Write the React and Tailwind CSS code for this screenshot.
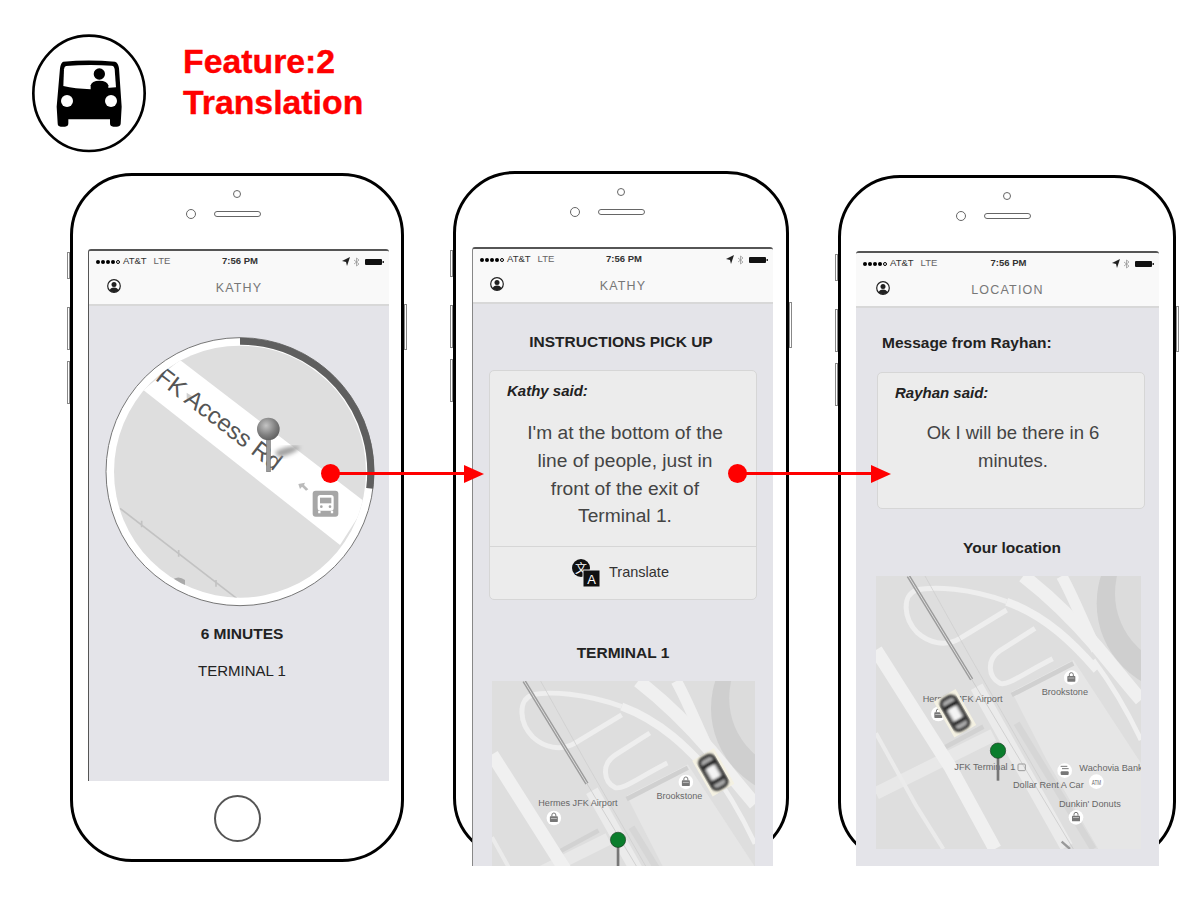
import React from 'react';

const font = { fontFamily: '"Liberation Sans", Arial, sans-serif' };

function Poi({ x, y, kind = 'bag' }) {
    return (
        <g>
            <circle cx={x} cy={y} r="22" fill="#fff" />
            {kind === 'bag' && (
                <g>
                    <rect x={x - 12} y={y - 5} width="24" height="17" rx="2" fill="#777" />
                    <path d={`M${x - 6} ${y - 5}v-4a6 6 0 0 1 12 0v4`} fill="none" stroke="#777" strokeWidth="3" />
                    <rect x={x - 9} y={y} width="18" height="2" fill="#ddd" />
                </g>
            )}
            {kind === 'car' && (
                <g>
                    <path d={`M${x - 12} ${y - 13}h20M${x - 8} ${y - 6}h20`} stroke="#777" strokeWidth="3" />
                    <rect x={x - 12} y={y + 2} width="24" height="11" rx="3" fill="#777" />
                </g>
            )}
            {kind === 'atm' && (
                <text x={x} y={y + 9} textAnchor="middle" fontSize="24" fill="#666" textLength="28" lengthAdjust="spacingAndGlyphs" style={font}>ATM</text>
            )}
        </g>
    );
}

function TerminalMap({ pin, car, className, maxLabelY = 900 }) {
    const labels = [
        ['Hermes JFK Airport', 188, 427],
        ['Brookstone', 545, 406],
        ['JFK Terminal 1', 283, 631],
        ['Wachovia Bank', 658, 633],
        ['Dollar Rent A Car', 459, 685],
        ["Dunkin' Donuts", 597, 741],
    ].filter((l) => l[2] < maxLabelY);
    return (
        <svg viewBox="48 48 795 819" className={className}>
            <defs>
                <filter id="soft"><feGaussianBlur stdDeviation="3" /></filter>
            </defs>
            <rect x="48" y="48" width="795" height="819" fill="#dedede" />
            <path d="M455 395L640 300L843 610V867H715L560 600Z" fill="#e6e6e6" />
            <path d="M455 405L640 310" stroke="#d0d0d0" strokeWidth="14" />
            <circle cx="980" cy="130" r="270" fill="#cfcfcf" />
            <circle cx="990" cy="100" r="225" fill="#dcdcdc" />
            <path d="M48 700L400 525" stroke="#e8e8e8" strokeWidth="38" fill="none" />
            <path d="M240 570L370 500" stroke="#d2d2d2" strokeWidth="14" fill="none" />
            <g fill="none" stroke="#f0f0f0">
                <path d="M490 48C570 110 650 190 710 260C760 320 800 370 843 420" strokeWidth="40" />
                <path d="M605 48C640 110 670 190 710 270" strokeWidth="34" />
                <path d="M700 300C760 380 810 470 843 540" strokeWidth="14" />
                <path d="M440 125C560 170 640 250 710 330" strokeWidth="24" />
                <path d="M48 270L270 620L405 867" strokeWidth="40" />
                <path d="M48 520L170 740L250 867" strokeWidth="12" stroke="#ebebeb" />
                <path d="M350 380L620 860" strokeWidth="40" stroke="#ebebeb" />
                <path d="M470 490L700 867" strokeWidth="20" stroke="#d6d6d6" />
                <path d="M440 125C330 85 220 78 170 90C125 105 130 175 172 218C205 248 255 262 300 235L440 150" strokeWidth="15" stroke="#eeeeee" />
                <path d="M525 205L420 272C378 300 385 352 420 370C445 378 490 340 578 296" strokeWidth="15" stroke="#eeeeee" />
            </g>
            <g fill="none">
                <path d="M145 48L335 358" stroke="#9c9c9c" strokeWidth="11" />
                <path d="M145 48L335 358" stroke="#dddddd" strokeWidth="3" />
                <path d="M195 48L330 290L560 690" stroke="#cccccc" strokeWidth="2" />
                <path d="M335 358L640 867" stroke="#c4c4c4" strokeWidth="2" />
                <path d="M605 845L630 867" stroke="#999" strokeWidth="7" />
            </g>
            {labels.map(([t, x, y]) => (
                <text key={t} x={x} y={y} fontSize="27.500" fill="#666" style={font}>{t}</text>
            ))}
            <Poi x={634} y={353} />
            <Poi x={235} y={462} />
            <Poi x={648} y={772} />
            <Poi x={614} y={632} kind="car" />
            <Poi x={709} y={665} kind="atm" />
            <rect x="474" y="612" width="22" height="20" rx="3" fill="none" stroke="#999" strokeWidth="3" />
            <g transform={`rotate(-30 ${car[0]} ${car[1]})`}>
                <rect x={car[0] - 38} y={car[1] - 62} width="76" height="124" fill="#f4f1e2" />
                <g filter="url(#soft)">
                    <rect x={car[0] - 24} y={car[1] - 52} width="48" height="104" rx="16" fill="#aaa" stroke="#333" strokeWidth="10" />
                    <rect x={car[0] - 20} y={car[1] - 34} width="40" height="14" fill="#222" />
                    <rect x={car[0] - 20} y={car[1] + 20} width="40" height="14" fill="#333" />
                    <rect x={car[0] - 13} y={car[1] - 20} width="26" height="40" rx="3" fill="#f4f4f4" />
                </g>
            </g>
            <rect x={pin[0] - 4} y={pin[1]} width="8" height="90" fill="#777" />
            <circle cx={pin[0]} cy={pin[1]} r="23" fill="#0a7d2c" stroke="#1d3d24" strokeWidth="2" />
        </svg>
    );
}

function PickupDial() {
    return (
        <svg viewBox="0 0 960 900" className="block w-[320px] h-[300px] shrink-0">
            <defs>
                <clipPath id="dial"><circle cx="450" cy="455" r="378" /></clipPath>
                <filter id="pinShadow"><feGaussianBlur stdDeviation="6" /></filter>
                <radialGradient id="pinHead" cx="40%" cy="35%" r="70%">
                    <stop offset="0%" stopColor="#c4c4c4" />
                    <stop offset="60%" stopColor="#808080" />
                    <stop offset="100%" stopColor="#5c5c5c" />
                </radialGradient>
            </defs>
            <circle cx="450" cy="455" r="402" fill="#fff" stroke="#777" strokeWidth="3" />
            <g clipPath="url(#dial)">
                <rect width="960" height="900" fill="#dedede" />
                <path d="M270 120L830 550L750 675L160 210Z" fill="#fff" />
                <path d="M90 565L440 835" stroke="#c2c2c2" strokeWidth="5" />
                <path d="M155 602v20M266 690v20M378 780v20" stroke="#c2c2c2" strokeWidth="5" />
                <path d="M245 780Q265 765 285 780V800Z" fill="#aaa" />
                <path d="M290 218L312 232L290 238Z" fill="#d0d0d0" />
                <text x="0" y="0" fontSize="72" fill="#555" textAnchor="end" transform="translate(552 454) rotate(37.5)" style={font}>JFK Access Rd</text>
                <path d="M625 492L645 488L642 495L655 508L648 512L636 500L630 507Z" fill="#bbb" />
            </g>
            <path d="M450 64A391 391 0 0 1 839 505" fill="none" stroke="#5f5f5f" strokeWidth="21" />
            <path d="M555 395Q595 375 632 380Q615 402 565 412Z" fill="#a0a0a0" filter="url(#pinShadow)" />
            <rect x="530" y="340" width="11" height="115" fill="#9a9a9a" stroke="#777" strokeWidth="2" />
            <circle cx="535" cy="327" r="34" fill="url(#pinHead)" />
            <rect x="668" y="512" width="77" height="78" rx="9" fill="#a6a6a6" />
            <rect x="683" y="525" width="48" height="47" rx="8" fill="#fff" />
            <rect x="690" y="533" width="34" height="17" fill="#a6a6a6" />
            <circle cx="694" cy="560" r="4" fill="#a6a6a6" />
            <circle cx="720" cy="560" r="4" fill="#a6a6a6" />
            <path d="M688 572v8M726 572v8" stroke="#fff" strokeWidth="7" />
        </svg>
    );
}

function StatusBar() {
    return (
        <div className="grid grid-cols-3 items-center shrink-0 h-[21px] pl-[7px] pr-[5px] bg-[#f9f9f9] text-[9.500px] text-[#333]">
            <div className="flex items-center whitespace-nowrap">
                <div className="flex items-center gap-[1px]">
                    {[0, 1, 2, 3].map((i) => (
                        <span key={i} className="w-[4px] h-[4px] rounded-full bg-black" />
                    ))}
                    <span className="w-[4px] h-[4px] rounded-full border-[0.5px] border-black" />
                </div>
                <span className="ml-[3px]">AT&amp;T</span>
                <span className="ml-[7px] text-[#666]">LTE</span>
            </div>
            <span className="text-center font-bold whitespace-nowrap">7:56 PM</span>
            <svg width="42" height="10" viewBox="0 0 42 10" className="justify-self-end">
                <path d="M0 4L8 0L5 9L4 5Z" fill="#222" />
                <path d="M12 3L17 7L14.500 9V1L17 3L12 7" fill="none" stroke="#999" strokeWidth="0.800" />
                <rect x="23" y="2" width="17" height="6" rx="1" fill="#111" />
                <rect x="40.500" y="4" width="1.500" height="2" fill="#333" />
            </svg>
        </div>
    );
}

function NavBar({ title, iconOffset }) {
    return (
        <div className="relative flex items-center justify-center shrink-0 h-[34px] bg-[#f9f9f9] border-b-2 border-[#d8d8d8]">
            <svg width="14" height="14" viewBox="0 0 14 14" className={`absolute top-[7px] ${iconOffset}`}>
                <circle cx="7" cy="7" r="6.300" fill="#fff" stroke="#222" strokeWidth="1.200" />
                <circle cx="7" cy="5.500" r="2.500" fill="#222" />
                <path d="M2.500 11.500Q3.500 8.500 7 8.500T11.500 11.500Q7 15 2.500 11.500Z" fill="#222" />
            </svg>
            <span className="text-[12.500px] tracking-[1.200px] text-[#777]">{title}</span>
        </div>
    );
}

function Phone({ width, height, className, screenMargin, screenWidth, screenHeight, title, iconOffset, children, homeButton, screenClass }) {
    return (
        <div className={`relative shrink-0 ${width} ${height} ${className}`}>
            <div className="absolute left-[-3px] top-[79px] w-[3px] h-[27px] bg-white border border-[#888]" />
            <div className="absolute left-[-3px] top-[134px] w-[3px] h-[43px] bg-white border border-[#888]" />
            <div className="absolute left-[-3px] top-[188px] w-[3px] h-[43px] bg-white border border-[#888]" />
            <div className="absolute right-[-3px] top-[131px] w-[3px] h-[46px] bg-white border border-[#888]" />
            <div className="flex flex-col h-full bg-white border-[3px] border-black rounded-[62px] pt-[14px]">
                <div className="self-center shrink-0 w-[8px] h-[8px] rounded-full border border-[#666]" />
                <div className="flex items-center justify-center shrink-0 gap-[18px] h-[10px] mt-[11px]">
                    <span className="w-[10px] h-[10px] rounded-full border border-[#666]" />
                    <span className="w-[47px] h-[6px] rounded-full border border-[#666]" />
                    <span className="w-[10px]" />
                </div>
                <div className={`relative overflow-hidden flex flex-col shrink-0 mt-[30px] bg-[#e4e4e9] border-t-2 border-[#555] rounded-t-[3px] ${screenMargin} ${screenWidth} ${screenHeight} ${screenClass}`}>
                    <StatusBar />
                    <NavBar title={title} iconOffset={iconOffset} />
                    {children}
                </div>
                {homeButton && <div className="self-center mt-[14px] w-[47px] h-[47px] rounded-full border-2 border-[#555]" />}
            </div>
        </div>
    );
}

function TranslateIcon() {
    return (
        <svg width="30" height="30" viewBox="0 0 30 30">
            <circle cx="10" cy="10" r="9" fill="#111" />
            <text x="10" y="14.500" textAnchor="middle" fontSize="12" fill="#fff" style={{ fontFamily: '"Noto Sans CJK SC", sans-serif' }}>文</text>
            <rect x="12" y="12" width="17" height="17" fill="#111" stroke="#ececec" strokeWidth="1" />
            <text x="20.500" y="26" textAnchor="middle" fontSize="13" fill="#fff" style={font}>A</text>
        </svg>
    );
}

function MessageCard({ author, lines, className, textClass, children }) {
    return (
        <div className={`flex flex-col bg-[#ececec] border border-[#d6d6d6] rounded-[5px] ${className}`}>
            <div className="pl-[17px] pt-[10px] text-[15px] leading-[20px] font-bold italic text-[#222]">{author} said:</div>
            <div className={`pl-[6px] text-center leading-[27.800px] text-[#444] ${textClass}`}>
                {lines.map((l) => (
                    <div key={l}>{l}</div>
                ))}
            </div>
            {children}
        </div>
    );
}

function Arrow({ className }) {
    return (
        <div className={`absolute flex items-center ${className}`}>
            <span className="w-[19px] h-[19px] rounded-full bg-[#ff0000]" />
            <span className="w-[126px] h-[3px] ml-[-1px] bg-[#ff0000]" />
            <svg width="20" height="18" viewBox="0 0 20 18" className="shrink-0 ml-[-1px]">
                <path d="M0 0L20 9L0 18Z" fill="#ff0000" />
            </svg>
        </div>
    );
}

export default function App() {
    return (
        <div className="relative w-[1200px] h-[900px] overflow-hidden bg-white" style={font}>
            <header className="flex h-[173px] pl-[32px] pt-[34px]">
                <svg width="116" height="120" viewBox="96 102 348 360" className="shrink-0">
                    <ellipse cx="267" cy="280" rx="167" ry="173" fill="#fff" stroke="#000" strokeWidth="8" />
                    <path d="M190 185Q265 178 345 185Q355 188 357 205L365 320L362 372Q360 380 350 380H340Q330 380 330 370V358H205V370Q205 380 195 380H182Q173 380 173 370L170 320L180 205Q182 188 190 185Z" fill="#000" />
                    <path d="M198 198Q265 192 335 197Q343 198 344 208L348 262L272 268Q225 266 190 258L192 208Q193 199 198 198Z" fill="#fff" />
                    <circle cx="298" cy="222" r="17" fill="#000" />
                    <path d="M272 270V256Q275 242 298 242Q322 242 325 256V270Z" fill="#000" />
                    <circle cx="201" cy="303" r="18" fill="#fff" />
                    <circle cx="333" cy="303" r="18" fill="#fff" />
                </svg>
                <h1 className="ml-[35px] mt-[7px] text-[33.800px] leading-[41px] font-bold text-[#ff0000] [-webkit-text-stroke:0.4px_#ff0000]">
                    Feature:2
                    <br />
                    Translation
                </h1>
            </header>

            <main className="flex items-start">
                <Phone
                    width="w-[334px]"
                    height="h-[689px]"
                    className="ml-[70px]"
                    screenMargin="ml-[15px]"
                    screenWidth="w-[301px]"
                    screenHeight="h-[532px]"
                    screenClass="border-l border-l-[#555]"
                    title="KATHY"
                    iconOffset="left-[18px]"
                    homeButton
                >
                    <div className="flex flex-col items-center flex-1">
                        <div className="self-start mt-[14px] ml-[1px]">
                            <PickupDial />
                        </div>
                        <div className="mt-[4px] text-[15.500px] leading-[20px] font-bold text-[#222] pl-[6px]">6 MINUTES</div>
                        <div className="mt-[17px] text-[15px] leading-[20px] text-[#222] pl-[6px]">TERMINAL 1</div>
                    </div>
                </Phone>

                <Phone
                    width="w-[336px]"
                    height="h-[689px]"
                    className="ml-[49px] mt-[-2px]"
                    screenMargin="ml-[16px]"
                    screenWidth="w-[301px]"
                    screenHeight="h-[619px]"
                    screenClass="border-l border-l-[#888]"
                    title="KATHY"
                    iconOffset="left-[17px]"
                >
                    <div className="flex flex-col items-center flex-1">
                        <div className="mt-[28px] pr-[4px] text-[15.500px] leading-[20px] font-bold text-[#222]">INSTRUCTIONS PICK UP</div>
                        <MessageCard
                            author="Kathy"
                            lines={["I'm at the bottom of the", 'line of people, just in', 'front of the exit of', 'Terminal 1.']}
                            className="shrink-0 mt-[18px] w-[268px] h-[230px]"
                            textClass="mt-[18px] text-[19.200px] pr-[2px]"
                        >
                            <div className="flex items-center justify-center gap-[8px] mt-[16px] h-[54px] pr-[6px] border-t border-[#d6d6d6] text-[14.500px] text-[#333]">
                                <TranslateIcon />
                                <span>Translate</span>
                            </div>
                        </MessageCard>
                        <div className="mt-[43px] text-[15.500px] leading-[20px] font-bold text-[#222]">TERMINAL 1</div>
                        <TerminalMap pin={[429, 528]} car={[717, 324]} maxLabelY={640} className="block shrink-0 mt-[18px] ml-[1px] w-[263px] h-[271px]" />
                    </div>
                </Phone>

                <Phone
                    width="w-[338px]"
                    height="h-[689px]"
                    className="ml-[49px] mt-[2px]"
                    screenMargin="ml-[15px]"
                    screenWidth="w-[303px]"
                    screenHeight="h-[615px]"
                    title="LOCATION"
                    iconOffset="left-[20px]"
                >
                    <div className="flex flex-col flex-1 pl-[20px]">
                        <div className="mt-[25px] ml-[6px] text-[15.500px] leading-[20px] font-bold text-[#222]">Message from Rayhan:</div>
                        <MessageCard
                            author="Rayhan"
                            lines={['Ok I will be there in 6', 'minutes.']}
                            className="shrink-0 mt-[19px] ml-[1px] w-[268px] h-[137px]"
                            textClass="mt-[16px] text-[18.500px] pr-[2px]"
                        />
                        <div className="mt-[29px] w-[272px] text-center text-[15.500px] leading-[20px] font-bold text-[#222]">Your location</div>
                        <TerminalMap pin={[414, 572]} car={[285, 460]} className="block shrink-0 mt-[18px] w-[265px] h-[273px]" />
                    </div>
                </Phone>
            </main>

            <Arrow className="left-[321px] top-[464px]" />
            <Arrow className="left-[728px] top-[464px]" />
        </div>
    );
}
